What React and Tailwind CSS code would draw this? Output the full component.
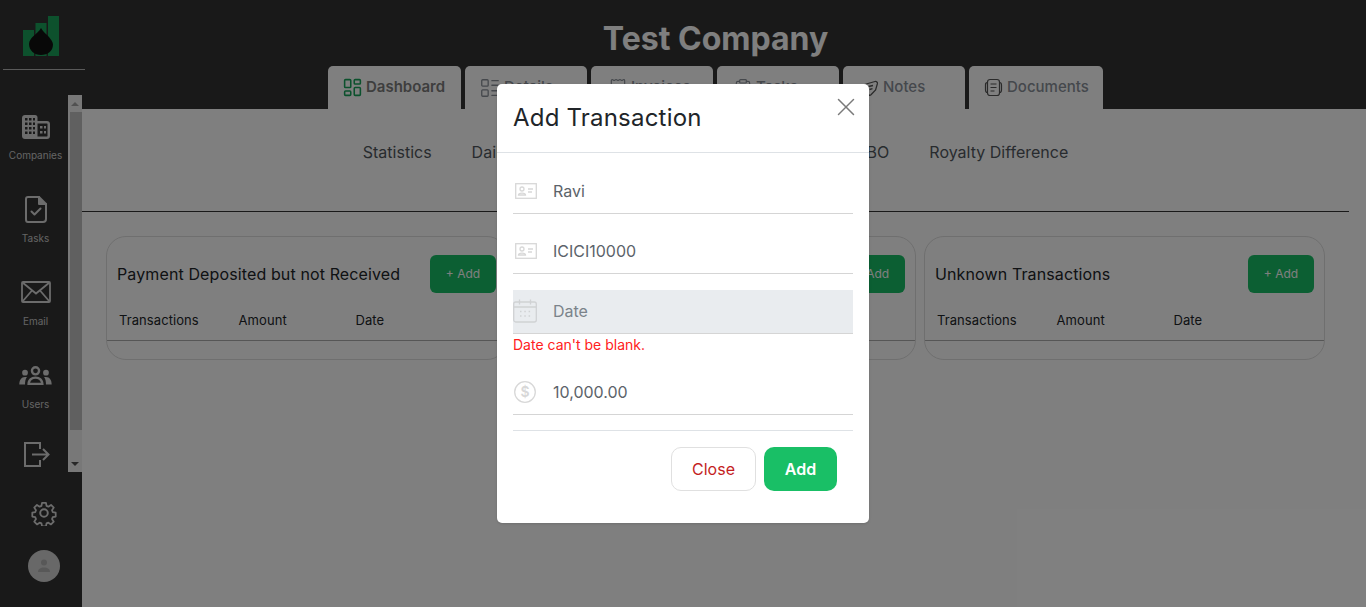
import { LayoutDashboard, LayoutList, ReceiptText, ClipboardList, X } from "lucide-react"

const tabs = [
  { label: "Dashboard", width: "w-[133px] pl-[14px] font-semibold text-[#7c7c7c]", icon: <LayoutDashboard className="h-[21px] w-[21px] text-[#19a35a]" strokeWidth={1.8} /> },
  { label: "Details", width: "w-[122px] pl-[14px] font-medium text-[#8a9099]", icon: <LayoutList className="h-[22px] w-[22px]" strokeWidth={1.4} /> },
  { label: "Invoices", width: "w-[122px] pl-[17px] font-medium text-[#8a9099]", icon: <ReceiptText className="h-[20px] w-[20px]" strokeWidth={1.4} /> },
  { label: "Tasks", width: "w-[122px] pl-[16px] font-medium text-[#8a9099]", icon: <ClipboardList className="h-[20px] w-[20px]" strokeWidth={1.4} /> },
  { label: "Notes", width: "w-[122px] pl-[19px] font-medium text-[#8a9099]", icon: <NotesIcon /> },
  { label: "Documents", width: "w-[134px] pl-[15px] font-medium text-[#8a9099]", icon: <DocsIcon /> },
]

function NotesIcon() {
  return (
    <svg width="18" height="18" viewBox="0 0 18 18" fill="none" stroke="#555" strokeWidth="1.3">
      <path d="M2.500 5.500 13 2.500c1.500-.4 2.700.8 2.400 2.200L13.600 11 9 15.800c-1 .8-2 .5-2.600-.4L3 9.500C1.900 7.800 1.700 6.300 2.500 5.500Z" />
      <path d="M6.500 7.500 11 6.500M7.500 10.500l3-.8" />
    </svg>
  )
}

function DocsIcon() {
  return (
    <svg width="19" height="19" viewBox="0 0 19 19" fill="none" stroke="#555" strokeWidth="1.2" className="mr-[1px]">
      <rect x="3.500" y="1.500" width="12" height="16" rx="2.500" />
      <path d="M3.500 4.500C1.500 4.500 1.500 5.500 1.500 7v5c0 1.500 0 2.500 2 2.500M15.500 4.500c2 0 2 1 2 2.500v5c0 1.500 0 2.500-2 2.500" />
      <path d="M6.500 6h6M6.500 9.500h6M6.500 13h4" />
    </svg>
  )
}

function BuildingIcon() {
  return (
    <svg width="28" height="24" viewBox="0 0 28 24" className="text-[#d8d8d8]">
      <path fill="currentColor" d="M3 0h10c1.600 0 2.500 1 2.500 2.500V6h9.500C26.600 6 28 7.300 28 9v12c0 1.700-1.300 3-3 3H3c-1.700 0-3-1.300-3-3V3C0 1.300 1.300 0 3 0Z" />
      <g fill="#333">
        <rect x="3" y="3" width="2.500" height="2.500" /><rect x="7" y="3" width="2.500" height="2.500" /><rect x="11" y="3" width="2" height="2.500" />
        <rect x="3" y="7.500" width="2.500" height="2.500" /><rect x="7" y="7.500" width="2.500" height="2.500" /><rect x="11" y="7.500" width="2" height="2.500" />
        <rect x="3" y="12" width="2.500" height="2.500" /><rect x="7" y="12" width="2.500" height="2.500" /><rect x="11" y="12" width="2" height="2.500" />
        <rect x="3" y="16.500" width="2.500" height="2.500" /><rect x="7" y="16.500" width="2.500" height="2.500" /><rect x="11" y="16.500" width="2" height="2.500" />
        <path d="M15.500 8.500H25c.3 0 .5.200.5.500v12c0 .3-.2.500-.5.500h-9.500Z" />
      </g>
      <g fill="currentColor">
        <rect x="18" y="11" width="2.500" height="2.500" /><rect x="22" y="11" width="2" height="2.500" />
        <rect x="18" y="16" width="2.500" height="2.500" /><rect x="22" y="16" width="2" height="2.500" />
      </g>
    </svg>
  )
}

function TaskIcon() {
  return (
    <svg width="22" height="27" viewBox="0 0 22 27" fill="none" stroke="#d8d8d8" strokeWidth="2" strokeLinejoin="round" strokeLinecap="round" className="-mt-[2px]">
      <path d="M3 1h11l7 7v15c0 1.500-1 3-3 3H3c-1.200 0-2-1-2-2.500V3c0-1.200.8-2 2-2Z" />
      <path d="M14 1v7h7" fill="#d8d8d8" />
      <path d="m6.500 15.500 3 3 6-6" />
    </svg>
  )
}

function MailIcon() {
  return (
    <svg width="30" height="22" viewBox="0 0 30 22" fill="none" stroke="#d8d8d8" strokeWidth="1.800" className="-mt-[2px]">
      <rect x="1" y="1" width="28" height="20" rx="1" />
      <path d="m1.500 1.500 13.500 11 13.500-11M1.500 20.500 11 9.500M28.500 20.500 19 9.500" />
    </svg>
  )
}

function UsersIcon() {
  return (
    <svg width="33" height="20" viewBox="0 0 34 21" fill="#d8d8d8">
      <path fillRule="evenodd" d="M17 0a5 5 0 1 1 0 10 5 5 0 0 1 0-10Zm0 2.500a2.500 2.500 0 1 0 0 5 2.500 2.500 0 0 0 0-5Z" />
      <circle cx="6" cy="7" r="3" /><circle cx="28" cy="7" r="3" />
      <path d="M0 19.500C0 15 2 11.500 6 11.500c.8 0 1.500.1 2 .4-1.500 1.800-2 4-2 7.600Z" />
      <path d="M34 19.500c0-4.500-2-8-6-8-.8 0-1.500.1-2 .4 1.500 1.800 2 4 2 7.600Z" />
      <path fillRule="evenodd" d="M17 11c4.800 0 8.500 2.800 8.500 8.500V20h-17v-.5C8.500 13.800 12.200 11 17 11Zm0 2.500c-2.800 0-5 1.500-5.700 4h11.400c-.7-2.500-2.900-4-5.700-4Z" />
    </svg>
  )
}

function LogoutIcon() {
  return (
    <svg width="26" height="25" viewBox="0 0 26 25" fill="none" stroke="#d8d8d8" strokeWidth="2" className="-mt-[10px] ml-[2px]">
      <path d="M16 7V1H1v23h15v-6" />
      <path d="M8 12.500h16M19 7l5.500 5.500L19 18" />
    </svg>
  )
}

function GearIcon() {
  return (
    <svg width="26" height="26" viewBox="0 0 24 24" fill="none" stroke="#d8d8d8" strokeWidth="1.800" strokeLinejoin="round">
      <path d="M10 1.500h4l.6 3.200 1.900.8 2.700-1.800 2.800 2.800-1.800 2.700.8 1.900 3 .6v4l-3 .6-.8 1.900 1.800 2.700-2.800 2.800-2.700-1.800-1.900.8-.6 3h-4l-.6-3-1.900-.8-2.700 1.800-2.800-2.800 1.800-2.700-.8-1.900-3-.6v-4l3-.6.8-1.900L2 6.500l2.800-2.800 2.700 1.800 1.900-.8Z" transform="translate(1.200 1.200) scale(.9)" />
      <circle cx="12" cy="12" r="3.500" />
    </svg>
  )
}

function Logo() {
  return (
    <svg width="36" height="40" viewBox="0 0 36 40">
      <rect x="0" y="14" width="11" height="26" fill="#1aa35a" />
      <rect x="12.500" y="7" width="11" height="33" fill="#1aa35a" />
      <rect x="25" y="0" width="11" height="40" fill="#1aa35a" />
      <path d="M18 12c2 4 5 5.500 8 9 2 2.500 4 5 4 7.500 0 6.500-5.400 10.500-12 10.500S6 34.500 6 28c0-3 2-5.500 4-7.500 3-3 6-5 8-8.500Z" fill="#111" />
    </svg>
  )
}

function NavItem({ icon, label }) {
  return (
    <div className="flex h-[83px] flex-col items-center justify-start pl-[3px]">
      <div className="flex h-[32px] items-center">{icon}</div>
      <span className="mt-[5px] text-[10px] leading-[14px] text-[#c8c8c8]">{label}</span>
    </div>
  )
}

function IdIcon() {
  return (
    <svg width="22" height="16" viewBox="0 0 22 16" fill="none" stroke="#d8d8d8" strokeWidth="1.300" className="ml-[2px] mr-[16px]">
      <rect x=".7" y=".7" width="20.600" height="14.600" />
      <circle cx="7" cy="6" r="2" />
      <path d="M3.500 12c0-2.500 7-2.500 7 0ZM13 6h5M13 9h4" />
    </svg>
  )
}

function CalendarIcon() {
  return (
    <svg width="24" height="24" viewBox="0 0 24 24" fill="none" stroke="#d0d2d4" strokeWidth="1.300" className="mr-[16px]">
      <rect x=".7" y="3" width="22.600" height="20" rx="2" />
      <path d="M.7 8h22.600M6.500 .5v5M17.500 .5v5" />
      <path d="M7 12.500h1.500M11.300 12.500h1.500M15.600 12.500h1.500M7 17h1.500M11.300 17h1.500M15.600 17h1.500" strokeDasharray="1.500 1" />
    </svg>
  )
}

function DollarIcon() {
  return (
    <svg width="22" height="22" viewBox="0 0 22 22" fill="none" stroke="#d8d8d8" strokeWidth="1.300" className="ml-[1px] mr-[17px]">
      <circle cx="11" cy="11" r="10.300" />
      <text x="11" y="16" textAnchor="middle" fontSize="14" fontWeight="600" fill="#d8d8d8" stroke="none" fontFamily="Inter, sans-serif">$</text>
    </svg>
  )
}

function Card({ title }) {
  return (
    <div className="h-[124px] overflow-hidden rounded-[20px] border border-[#dedede]">
      <div className="flex items-center justify-between px-[10px] pt-[18px]">
        <span className="text-[16px] tracking-[0.12px] text-[#212529]">{title}</span>
        <button className="h-[38px] w-[66px] rounded-[6px] bg-[#19bf66] text-[12px] text-white">+ Add</button>
      </div>
      <div className="mt-[15px] flex h-[33px] items-start border-b border-[#adadad] pl-[12px] pt-[3px] text-[13px] tracking-[0.08px] text-[#212529]">
        <span className="w-[119.500px]">Transactions</span>
        <span className="w-[117px]">Amount</span>
        <span>Date</span>
      </div>
    </div>
  )
}

function Field({ icon, value }) {
  return (
    <div className="flex h-[44px] items-center border-b border-[#d5d5d5] pb-[2px] text-[16px] text-[#5c636a]">
      {icon}
      <span>{value}</span>
    </div>
  )
}

export default function App() {
  return (
    <div className="relative flex h-screen w-full overflow-hidden bg-white font-['Inter',sans-serif]">
      {/* sidebar */}
      <aside className="flex w-[82px] shrink-0 flex-col bg-[#333333]">
        <div className="flex justify-center pt-[16px]">
          <Logo />
        </div>
        <div className="relative z-10 ml-[3px] mt-[13px] h-px w-[82px] shrink-0 bg-[#5a5a5a]" />
        <div className="mt-[25px] flex h-[377px]">
          <div className="w-[68px] overflow-hidden pt-[16px]">
            <NavItem icon={<BuildingIcon />} label="Companies" />
            <NavItem icon={<TaskIcon />} label="Tasks" />
            <NavItem icon={<MailIcon />} label="Email" />
            <NavItem icon={<UsersIcon />} label="Users" />
            <NavItem icon={<LogoutIcon />} label="" />
          </div>
          {/* scrollbar */}
          <div className="flex w-[14px] flex-col bg-[#f1f1f1]">
            <div className="flex h-[17px] items-center justify-center">
              <div className="h-0 w-0 border-x-[4px] border-b-[4px] border-x-transparent border-b-[#a3a3a3]" />
            </div>
            <div className="ml-[2px] h-[318px] bg-[#c1c1c1]" />
            <div className="flex flex-1 items-end justify-center pb-[6px]">
              <div className="h-0 w-0 border-x-[4px] border-t-[4px] border-x-transparent border-t-[#505050]" />
            </div>
          </div>
        </div>
        <div className="mt-[28px] flex justify-center pl-[5px]">
          <GearIcon />
        </div>
        <div className="mt-[24px] flex justify-center pl-[6px]">
          <div className="flex h-[32px] w-[32px] items-center justify-center rounded-full bg-[#d0d0d0]">
            <svg width="14" height="14" viewBox="0 0 14 14" fill="#b0b0b0">
              <circle cx="7" cy="3.500" r="3" />
              <path d="M1 13c0-3 2.500-4.500 6-4.500s6 1.500 6 4.500Z" />
            </svg>
          </div>
        </div>
      </aside>

      {/* main */}
      <main className="flex min-w-0 flex-1 flex-col pr-[17px]">
        <header className="-mr-[17px] h-[109px] shrink-0 bg-[#333333] pr-[17px]">
          <h1 className="pt-[19px] text-center text-[32px] font-bold leading-[39px] text-white">Test Company</h1>
          <div className="mt-[8px] flex justify-center gap-1">
            {tabs.map((t) => (
              <div key={t.label} className={`flex h-[43px] items-center gap-[3px] rounded-t-[5px] bg-white text-[15px] ${t.width}`}>
                {t.icon}
                <span>{t.label}</span>
              </div>
            ))}
          </div>
        </header>

        <nav className="flex h-[103px] shrink-0 justify-center gap-10 border-b border-[#333333] pt-[33px] text-[16px] leading-[20px] text-[#51575d]">
          <span>Statistics</span>
          <span>Daily Transactions</span>
          <span className="-mr-[4px]">Reconciliation</span>
          <span>Due from BO</span>
          <span>Royalty Difference</span>
        </nav>

        <div className="grid grid-cols-3 gap-2 px-6 pt-6">
          <Card title="Payment Deposited but not Received" />
          <Card title="Payment Received but not Deposited" />
          <Card title="Unknown Transactions" />
        </div>
      </main>

      {/* modal */}
      <div className="absolute inset-0 flex justify-center bg-black/50 pt-[84px]">
        <div className="relative h-[439px] w-[372px] rounded-[5px] bg-white shadow-sm">
          <div className="flex h-[69px] items-center border-b border-[#dee2e6] px-4">
            <h2 className="text-[24px] font-normal tracking-[0.2px] text-[#212529]">Add Transaction</h2>
          </div>
          <X className="absolute right-[8px] top-[8px] h-[30px] w-[30px] text-[#7a7a7a]" strokeWidth={1.2} />
          <div className="flex flex-col px-4 pt-[17px]">
            <Field icon={<IdIcon />} value="Ravi" />
            <div className="mt-4">
              <Field icon={<IdIcon />} value="ICICI10000" />
            </div>
            <div className="mt-4 flex h-[44px] items-center border-b border-[#d5d5d5] bg-[#e9ecef] pb-[2px] text-[16px] text-[#7b838a]">
              <CalendarIcon />
              <span>Date</span>
            </div>
            <div className="h-[37px] pt-[2px] text-[14px] leading-[18px] text-[#ff2020]">Date can't be blank.</div>
            <Field icon={<DollarIcon />} value="10,000.00" />
            <div className="mt-[15px] h-px bg-[#dee2e6]" />
            <div className="mt-4 flex justify-end gap-2 pr-4">
              <button className="h-[44px] w-[85px] rounded-[10px] border border-[#e0e0e0] text-[16px] font-normal text-[#c41e1e]">Close</button>
              <button className="h-[44px] w-[73px] rounded-[10px] bg-[#19bf66] text-[16px] font-semibold text-white">Add</button>
            </div>
          </div>
        </div>
      </div>
    </div>
  )
}
